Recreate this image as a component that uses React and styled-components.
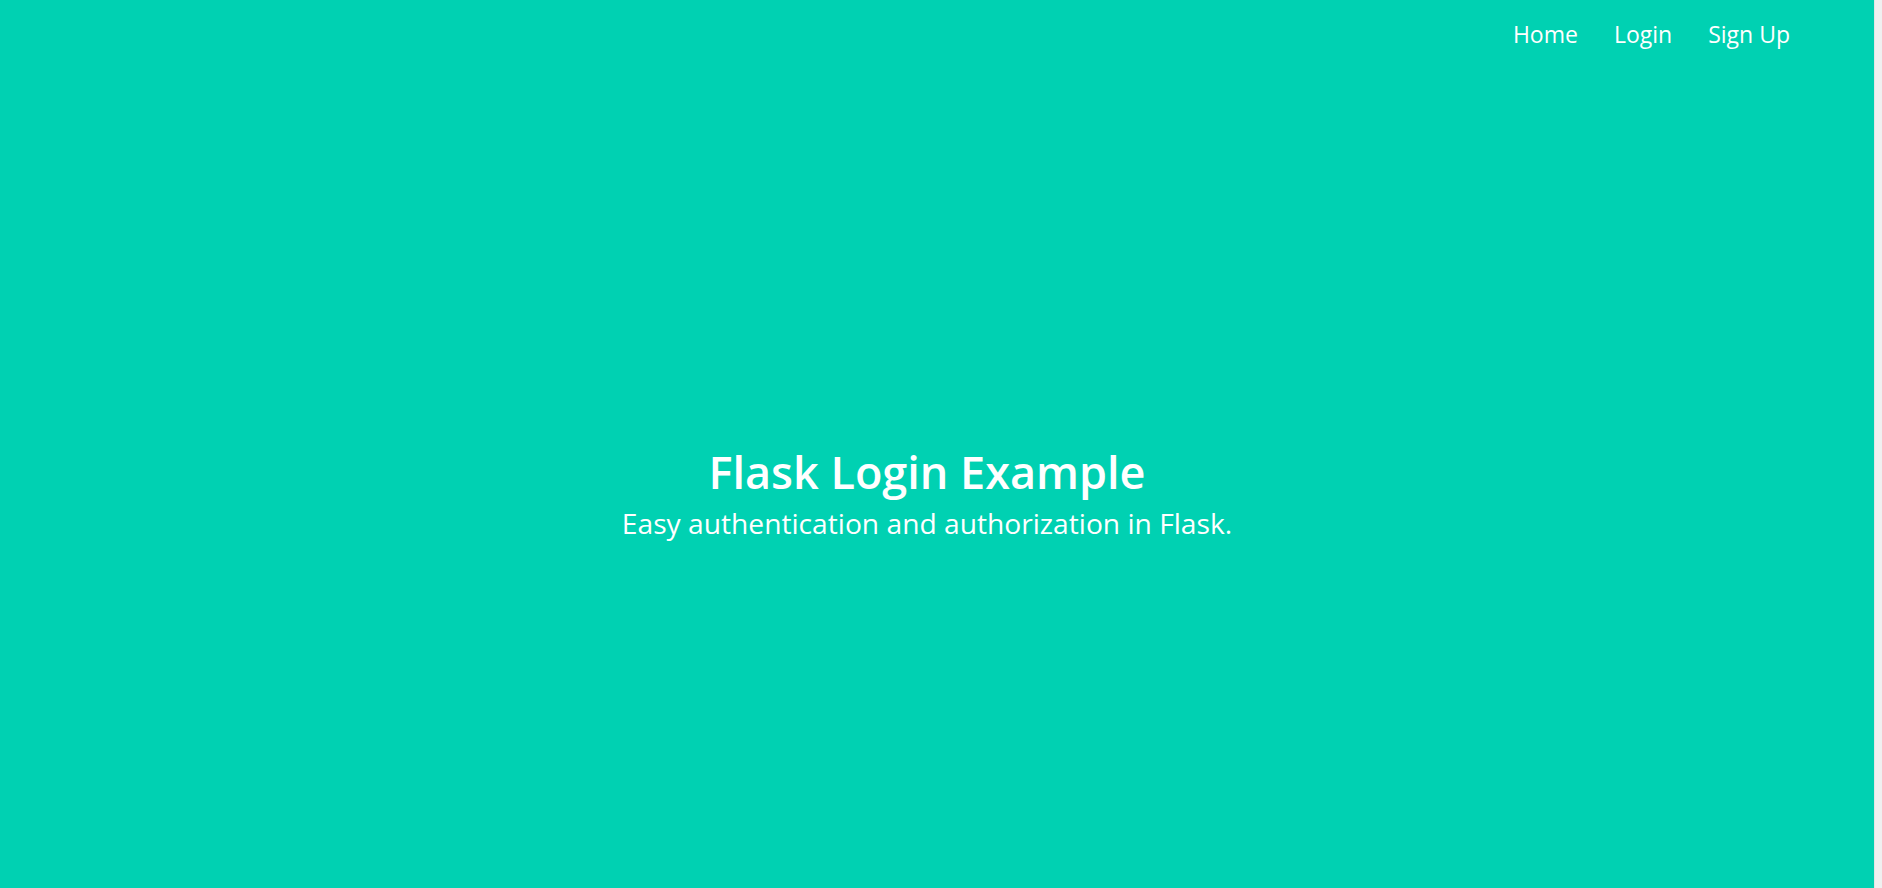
import styled, { createGlobalStyle } from 'styled-components';

const GlobalStyle = createGlobalStyle`
    html, body {
        margin: 0;
        padding: 0;
        height: 100%;
    }
    body {
        font-family: "Open Sans", "Noto Sans", sans-serif;
        overflow: hidden;
    }
    #root {
        height: 100%;
    }
`;

export default function App () {
    return (
        <StyledPage>
            <GlobalStyle />
            <Hero>
                <NavBar>
                    <NavItem href="#">Home</NavItem>
                    <NavItem href="#">Login</NavItem>
                    <NavItem href="#">Sign Up</NavItem>
                </NavBar>
                <HeroBody>
                    <Title>Flask Login Example</Title>
                    <Subtitle>Easy authentication and authorization in Flask.</Subtitle>
                </HeroBody>
            </Hero>
            <ScrollTrack />
        </StyledPage>
    )
}

const StyledPage = styled.div`
    display: flex;
    height: 888px;
    width: 100%;
`;

const Hero = styled.section`
    flex: 1;
    display: flex;
    flex-direction: column;
    background: #00d1b2;
    color: #fff;
`;

const NavBar = styled.nav`
    display: flex;
    justify-content: flex-end;
    align-items: center;
    height: 68px;
    padding-right: 66px;
`;

const NavItem = styled.a`
    color: #fff;
    text-decoration: none;
    font-size: 23px;
    padding: 0 18px;
    line-height: 1;
`;

const HeroBody = styled.div`
    flex: 1;
    display: flex;
    flex-direction: column;
    align-items: center;
    justify-content: center;
    padding-right: 20px;
    padding-top: 32px;
`;

const Title = styled.h1`
    margin: 0;
    font-size: 45px;
    font-weight: 600;
    line-height: 1.125;
`;

const Subtitle = styled.h2`
    margin: 8px 0 0;
    font-size: 28.2px;
    font-weight: 400;
    line-height: 1.25;
`;

const ScrollTrack = styled.div`
    width: 8px;
    flex-shrink: 0;
    background: #f0f0f0;
    border-left: 1px solid #e4e4e4;
    box-sizing: border-box;
`;
